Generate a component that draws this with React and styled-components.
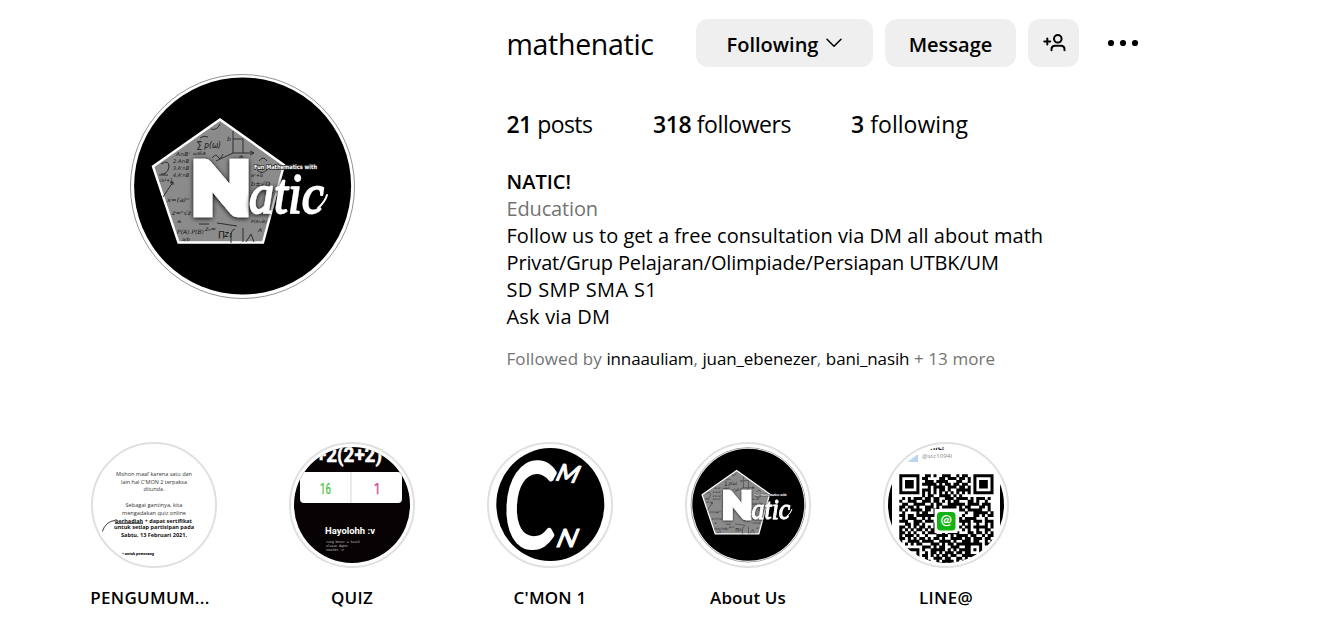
import React from "react";
import styled, { createGlobalStyle } from "styled-components";

const GlobalStyle = createGlobalStyle`
  * { box-sizing: border-box; }
  body {
    margin: 0;
    background: #fff;
    color: #000;
    font-family: "Open Sans", "Noto Sans", sans-serif;
    overflow: hidden;
  }
`;

const Page = styled.main`
  width: 1330px;
  height: 633px;
  overflow: hidden;
`;

const Header = styled.header`
  display: flex;
  height: 442px;
  padding-left: 130px;
`;

const Avatar = styled.div`
  width: 225px;
  height: 225px;
  margin: 74px 151.5px 0 0;
  flex: none;
  svg { display: block; }
`;

const Info = styled.section`
  display: flex;
  flex-direction: column;
  padding-top: 19px;
`;

const Actions = styled.div`
  display: flex;
  align-items: center;
  height: 48px;
`;

const Username = styled.h2`
  width: 189.5px;
  margin: 0;
  padding-top: 1px;
  font-size: 28.5px;
  line-height: 48px;
  font-weight: 400;
  letter-spacing: ${(p) => p.$spacing}px;
  white-space: nowrap;
`;

const Button = styled.button`
  display: flex;
  align-items: center;
  justify-content: center;
  width: ${(p) => p.$width}px;
  height: 48px;
  margin-right: 12px;
  padding: 3px 0 0;
  border: 0;
  border-radius: 12px;
  background: #efefef;
  color: #000;
  font: 600 20px/27px "Open Sans", "Noto Sans", sans-serif;
  letter-spacing: ${(p) => p.$spacing || 0}px;
  white-space: nowrap;
  svg { display: block; margin: -4px 0 0 8px; }
`;

const IconButton = styled(Button)`
  margin-right: 28px;
  padding: 0;
  svg { margin: 0; }
`;

const Stats = styled.ul`
  display: flex;
  gap: 60px;
  margin: 40px 0 0;
  padding: 0;
  list-style: none;
  font-size: 23px;
  line-height: 34px;
`;

const Stat = styled.li`
  width: ${(p) => p.$width}px;
  white-space: nowrap;
  letter-spacing: ${(p) => p.$spacing}px;
  b { font-weight: 600; }
`;

const Bio = styled.div`
  margin-top: 27px;
  font-size: 20px;
  line-height: 27px;
`;

const BioLine = styled.div`
  color: ${(p) => (p.$muted ? "#737373" : "#000")};
  font-weight: ${(p) => (p.$strong ? 600 : 400)};
  letter-spacing: ${(p) => p.$spacing || 0}px;
  white-space: nowrap;
`;

const FollowedBy = styled.div`
  margin-top: 18px;
  color: #737373;
  font-size: 17px;
  line-height: 22px;
  letter-spacing: 0.1px;
  white-space: nowrap;
`;

const Follower = styled.span`
  color: #000;
  letter-spacing: -0.12px;
`;

const Highlights = styled.ul`
  display: flex;
  gap: 72px;
  margin: 0;
  padding: 0 0 0 91px;
  list-style: none;
`;

const Highlight = styled.li`
  display: flex;
  flex-direction: column;
  align-items: center;
  width: 126px;
`;

const Ring = styled.div`
  width: 126px;
  height: 126px;
  padding: 3px;
  border: 2px solid #e0e0e0;
  border-radius: 50%;
  svg { display: block; border-radius: 50%; }
`;

const Label = styled.span`
  margin-top: 18px;
  padding-right: ${(p) => p.$shift || 0}px;
  font-size: 17px;
  line-height: 24px;
  font-weight: 600;
  letter-spacing: ${(p) => p.$spacing}px;
  white-space: nowrap;
`;

const formulas = [
  ["∑ p(ω)", 67, 74, 9, 24], ["ω∈A", 63, 81, 4.5, 13], ["A∩B'", 46, 82, 5, 14], ["2.A∩B", 43, 89, 5, 16],
  ["3.A'∩B", 43, 96, 5, 16], ["4.A'∩B", 43, 103, 5, 16], ["b", 97, 67, 6, 4], ["a", 109, 84, 5, 4],
  ["√x²+1", 29, 108, 5, 14], ["aˣ+b", 121, 103, 5, 12],
  ["b±√D", 121, 112, 6, 19], ["x=(a)ⁿ", 37, 128, 6, 22], ["z=ⁿ√z", 42, 141, 6, 19], ["a", 47, 149, 5, 4],
  ["P(A).P(B)", 47, 160, 6, 27], ["zₙ=", 75, 157, 6, 11], ["∏z₁", 88, 163, 8, 14], ["P(A∪B)", 121, 149, 4.5, 16],
  ["A", 128, 158, 5, 4], ["a/b", 52, 167, 4.5, 8]
];

function NaticArt({ id }) {
  return (
    <g>
      <defs>
        <filter id={`glow-${id}`} x="-20%" y="-20%" width="140%" height="140%">
          <feDropShadow dx="0" dy="1" stdDeviation="2.4" floodColor="#000" floodOpacity="1" />
        </filter>
      </defs>
      <circle cx="112.6" cy="112" r="108.5" fill="#000" />
      <polygon points="90,45.5 154,91 133,168.5 48.5,168.5 23,92.5" fill="#8b8b8b" stroke="#fff" strokeWidth="2.4" />
      <g fill="none" stroke="#222" strokeWidth=".9">
        <path d="M103 57V79H124M120 77l4 2-4 2M103 65h10v14M103 79L86 87" />
        <path d="M81 55q6 2 9-5M31 90q8-5 8 3q-2 8-8 7M33 123l10-15M43 108l-3 1M43 108v3" />
        <path d="M87 149l20 3M101 169v-9q1-5 4-5M113 154v14M116 168l5-8 3 8M69 150h10M29 101h9" />
        <path d="M127 96q5 5 10 0M129 87q4-6 8 0M82 84q4-5 6-1t5-3M70 64q4-3 8-1" />
      </g>
      <g fill="#151515" fontFamily="DejaVu Sans" fontStyle="italic">
        {formulas.map(([t, x, y, s, w], i) => (
          <text key={i} x={x} y={y} fontSize={s} textLength={w} lengthAdjust="spacingAndGlyphs">{t}</text>
        ))}
      </g>
      <text x="62.5" y="138.5" fontFamily="Lato" fontWeight="900" fontSize="69" textLength="57" lengthAdjust="spacingAndGlyphs" fill="#fff" stroke="#fff" strokeWidth="8.5" filter={`url(#glow-${id})`}>N</text>
      <text x="119" y="139" fontFamily="Liberation Serif" fontStyle="italic" fontSize="57" textLength="75" lengthAdjust="spacingAndGlyphs" fill="#fff" stroke="#fff" strokeWidth="1.7" strokeLinejoin="round" filter={`url(#glow-${id})`}>atic</text>
      <path d="M188 134Q195 128 197 121" fill="none" stroke="#fff" strokeWidth="2" strokeLinecap="round" />
      <text x="124" y="95" fontFamily="DejaVu Sans" fontWeight="700" fontSize="6" textLength="63" lengthAdjust="spacingAndGlyphs" fill="#fff" stroke="#222" strokeWidth="1.4" paintOrder="stroke">Fun Mathematics with</text>
    </g>
  );
}

function AvatarArt() {
  return (
    <svg width="225" height="225" viewBox="0 0 225 225">
      <circle cx="112.5" cy="112.5" r="112" fill="#fff" stroke="#777" strokeWidth=".8" />
      <NaticArt id="avatar" />
    </svg>
  );
}

const announcement = [
  ["Mohon maaf karena satu dan", 58, 28.5, 76, 400], ["lain hal C'MON 2 terpaksa", 58, 36.5, 66, 400],
  ["ditunda.", 58, 44, 21, 400], ["Sebagai gantinya, kita", 58, 59.5, 57, 400],
  ["mengadakan quiz online", 58, 67.5, 64, 400], ["berhadiah + dapat sertifikat", 57.5, 75.5, 77, 700],
  ["untuk setiap partisipan pada", 58, 81.7, 80, 700], ["Sabtu, 13 Februari 2021.", 58, 89.5, 66, 700]
];

function AnnouncementArt() {
  return (
    <svg width="116" height="116" viewBox="0 0 116 116">
      <g fontFamily="Open Sans" fontSize="5.9" textAnchor="middle">
        {announcement.map(([t, x, y, w, weight]) => (
          <text key={t} x={x} y={y} textLength={w} lengthAdjust="spacingAndGlyphs" fontWeight={weight} fill={weight === 700 ? "#111" : "#333"}>{t}</text>
        ))}
      </g>
      <path d="M6 85Q10 74 19 73.5M19 76.3h28" fill="none" stroke="#222" strokeWidth=".9" />
      <text x="24" y="107.5" fontFamily="Open Sans" fontSize="4" fontWeight="800" textLength="34" lengthAdjust="spacingAndGlyphs" fill="#111">~e untuk pemenang</text>
    </svg>
  );
}

function QuizArt() {
  return (
    <svg width="116" height="116" viewBox="0 0 116 116">
      <rect width="116" height="116" fill="#070304" />
      <text x="22" y="15" fontFamily="Roboto" fontWeight="700" fontSize="20" textLength="66" lengthAdjust="spacingAndGlyphs" fill="#fff" stroke="#fff" strokeWidth=".5">+2(2+2)</text>
      <rect x="6" y="25" width="102" height="31" rx="4" fill="#fff" />
      <path d="M57 25v31" stroke="#ddd" strokeWidth="1.2" />
      <g fontFamily="Roboto" fontSize="15">
        <text x="26" y="46.5" textLength="11" lengthAdjust="spacingAndGlyphs" fill="#42c73f" stroke="#42c73f" strokeWidth=".3">16</text>
        <text x="80" y="46.5" textLength="6.5" lengthAdjust="spacingAndGlyphs" fill="#d04f98" stroke="#d04f98" strokeWidth=".5">1</text>
      </g>
      <text x="31" y="87" fontFamily="Roboto" fontWeight="700" fontSize="9.5" textLength="50" lengthAdjust="spacingAndGlyphs" fill="#fff">Hayolohh :v</text>
      <g fontFamily="Liberation Mono" fontSize="3.4" fill="#bbb">
        <text x="32" y="95.5" textLength="34">Yang benar = kasih</text>
        <text x="32" y="99.5" textLength="22">alasan dapet</text>
        <text x="32" y="103.5" textLength="18">voucher :v</text>
      </g>
    </svg>
  );
}

function CmonArt() {
  return (
    <svg width="116" height="116" viewBox="0 0 116 116">
      <ellipse cx="58.3" cy="57.6" rx="54" ry="56.5" fill="#000" />
      <g fill="#fff" stroke="#fff" strokeLinejoin="round" fontFamily="Lato">
        <text transform="translate(10 100) skewX(-3)" fontSize="117" textLength="52" lengthAdjust="spacingAndGlyphs" strokeWidth="4">C</text>
        <text transform="translate(62 33) rotate(8) skewX(-16)" fontSize="24" textLength="22" lengthAdjust="spacingAndGlyphs" strokeWidth="1.2">M</text>
        <text transform="translate(62.5 100) skewX(-22)" fontSize="25" textLength="20" lengthAdjust="spacingAndGlyphs" strokeWidth="1.2">N</text>
      </g>
    </svg>
  );
}

function AboutArt() {
  return (
    <svg width="116" height="116" viewBox="0 0 116 116">
      <circle cx="58.3" cy="57.8" r="57.3" fill="#fff" stroke="#666" strokeWidth=".6" />
      <g transform="translate(0.2 0) scale(.516)"><NaticArt id="about" /></g>
    </svg>
  );
}

const qrRows = [
  "111111100110100111001011001111111",
  "100000101100001101110110101000001",
  "101110100111011110001100101011101",
  "101110101111101011011011001011101",
  "101110100010111101110110101011101",
  "100000101110101101001111101000001",
  "111111101010101010101010101111111",
  "000000001011001111010100000000000",
  "010101110110110011101111010111010",
  "100111001110110101011000110100100",
  "011001111001011001111110111101110",
  "110110100111010111110101100011010",
  "101011110110110000000110111110010",
  "010000101100100000000001001111101",
  "110110111111100000000010001101011",
  "010111001010010000000101111000100",
  "111001110111010000000111101110111",
  "001101101000100000000010100100101",
  "110101011010110000000101101111101",
  "101010110101100000000010100100110",
  "110101001011100101111000110110101",
  "101110100100011110101111011001011",
  "110101011010110100111101101110110",
  "100111101111001111010011101100101",
  "001010110001110101101111111110110",
  "000000001110101100111001100010010",
  "111111101001111101010111101010111",
  "100000100101101011101101100010010",
  "101110101101010110110011111110100",
  "101110100100111011001101010100000",
  "101110101110010111101011001010000",
  "100000101011101101011100010100000"
];
const qrPath = qrRows
  .map((row, y) => [...row].map((v, x) => (v === "1" ? `M${x} ${y}h1.06v1.06h-1.06z` : "")).join(""))
  .join("");

function LineArt() {
  return (
    <svg width="116" height="116" viewBox="0 0 116 116">
      <rect width="116" height="116" fill="#fff" />
      <path d="M0 37H4V84H0zM112 37h4v47h-4z" fill="#000" />
      <path d="M19 15L30 7v8z" fill="#bcd4f2" />
      <text x="42" y="2.5" fontFamily="Open Sans" fontWeight="700" fontSize="8" fill="#222">nic!</text>
      <text x="34" y="11" fontFamily="Open Sans" fontSize="5.6" textLength="30" lengthAdjust="spacingAndGlyphs" fill="#888">@stz1094l</text>
      <path d={qrPath} transform="translate(11.3 27.2) scale(2.85)" fill="#000" />
      <rect x="46.5" y="62" width="23" height="24" fill="#fff" />
      <rect x="49" y="65" width="18.5" height="18.5" rx="3.5" fill="#13b313" />
      <text x="58.2" y="78" textAnchor="middle" fontFamily="Lato" fontWeight="700" fontSize="13.5" fill="#fff">@</text>
    </svg>
  );
}

function ChevronDown() {
  return (
    <svg width="16" height="10" viewBox="0 0 16 10" fill="none" stroke="#000" strokeWidth="1.5" strokeLinecap="round" strokeLinejoin="round">
      <path d="M1 1.2L8 8.3L15 1.2" />
    </svg>
  );
}

function AddPerson() {
  return (
    <svg width="24" height="24" viewBox="0 0 24 24" fill="none" stroke="#000" strokeWidth="2" strokeLinecap="round">
      <circle cx="15.8" cy="7.8" r="3.8" />
      <path d="M9.5 19.3v-1q0-3.6 3.6-3.6h5.8q3.6 0 3.6 3.6v1M2.3 10.5h6M5.3 7.5v6" />
    </svg>
  );
}

function MoreDots() {
  return (
    <svg width="32" height="8" viewBox="0 0 32 8">
      <circle cx="4" cy="4" r="3.1" /><circle cx="16" cy="4" r="3.1" /><circle cx="28" cy="4" r="3.1" />
    </svg>
  );
}

const highlights = [
  { label: "PENGUMUM...", art: AnnouncementArt, spacing: 0.3, shift: 8 },
  { label: "QUIZ", art: QuizArt, spacing: 0.3 },
  { label: "C'MON 1", art: CmonArt, spacing: 0.2 },
  { label: "About Us", art: AboutArt, spacing: 0.1 },
  { label: "LINE@", art: LineArt, spacing: 0.35 }
];

export default function App() {
  return (
    <Page>
      <GlobalStyle />
      <Header>
        <Avatar><AvatarArt /></Avatar>
        <Info>
          <Actions>
            <Username $spacing={-0.3}>mathenatic</Username>
            <Button $width={177}>Following<ChevronDown /></Button>
            <Button $width={131}>Message</Button>
            <IconButton $width={51} aria-label="Similar accounts"><AddPerson /></IconButton>
            <MoreDots />
          </Actions>
          <Stats>
            <Stat $width={86.5} $spacing={-0.55}><b>21</b> posts</Stat>
            <Stat $width={138} $spacing={-0.42}><b>318</b> followers</Stat>
            <Stat $width={118} $spacing={0.05}><b>3</b> following</Stat>
          </Stats>
          <Bio>
            <BioLine $strong>NATIC!</BioLine>
            <BioLine $muted $spacing={-0.15}>Education</BioLine>
            <BioLine $spacing={0.03}>Follow us to get a free consultation via DM all about math</BioLine>
            <BioLine $spacing={-0.15}>Privat/Grup Pelajaran/Olimpiade/Persiapan UTBK/UM</BioLine>
            <BioLine $spacing={0.35}>SD SMP SMA S1</BioLine>
            <BioLine $spacing={0.2}>Ask via DM</BioLine>
          </Bio>
          <FollowedBy>
            Followed by <Follower>innaauliam</Follower>, <Follower>juan_ebenezer</Follower>, <Follower>bani_nasih</Follower> + 13 more
          </FollowedBy>
        </Info>
      </Header>
      <Highlights>
        {highlights.map(({ label, art: Art, spacing, shift }) => (
          <Highlight key={label}>
            <Ring><Art /></Ring>
            <Label $spacing={spacing} $shift={shift}>{label}</Label>
          </Highlight>
        ))}
      </Highlights>
    </Page>
  );
}
